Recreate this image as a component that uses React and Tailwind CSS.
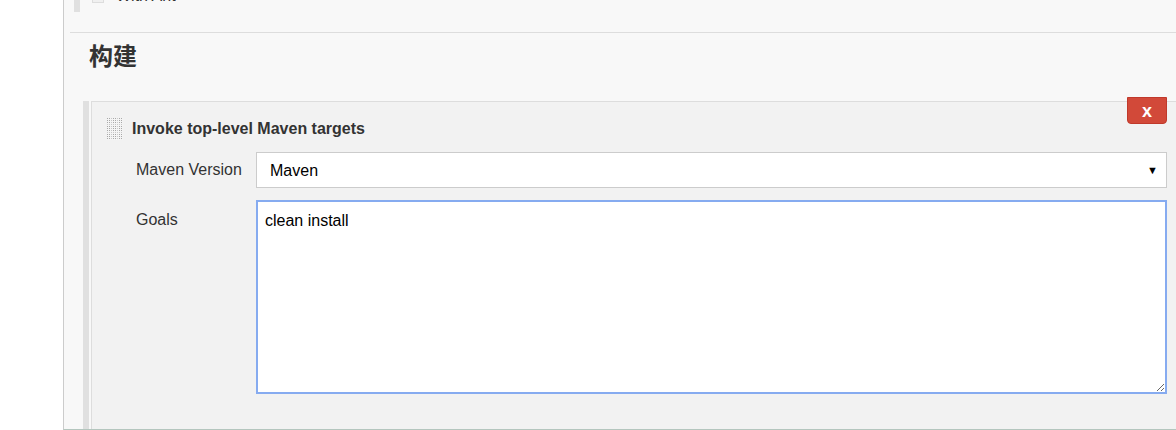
import React from "react";

function DragHandle() {
  const dots = [];
  for (let r = 0; r < 11; r++) {
    for (let c = 0; c < 8; c++) {
      dots.push(
        <rect key={r + "-" + c} x={c * 2} y={r * 2} width="1" height="1" fill={(r % 4 === 3 || c % 3 === 2) ? "#c8c8c8" : "#a8a8a8"} />
      );
    }
  }
  return (
    <svg width="16" height="22" viewBox="0 0 16 22" className="shrink-0">
      <rect x="0" y="0" width="16" height="22" fill="#f4f4f4" />
      {dots}
    </svg>
  );
}

export default function App() {
  return (
    <div className="w-[1176px] h-[430px] flex bg-white overflow-hidden" style={{ fontFamily: '"Liberation Sans", Arial, sans-serif' }}>
      <div className="w-[63px] shrink-0 bg-white" />
      <div className="flex-1 flex flex-col border-l border-[#cccccc] border-b border-b-[#b4c6be] bg-[#f8f8f8] min-w-0">
        {/* previous section tail */}
        <div className="h-[12px] flex ml-[10px] overflow-hidden">
          <div className="w-[6px] h-[12px] bg-[#e0e0e0]" />
          <div className="flex items-start h-[12px] overflow-hidden">
            <div className="ml-[12px] -mt-[12px] flex items-center gap-[12px] text-[16px] text-[#333]">
              <span className="w-[12px] h-[14px] border border-[#ddd] bg-[#f0f0f0] inline-block" />
              <span className="leading-[16px]">With Ant</span>
            </div>
          </div>
        </div>
        <div className="h-[20px]" />
        <div className="ml-[6px] border-t border-[#dddddd]" />
        <div className="pl-[25px] pt-[6px] h-[68px] text-[24px] leading-[32px] font-bold text-[#333]" style={{ fontFamily: '"Noto Sans CJK SC", "Liberation Sans", sans-serif' }}>
          构建
        </div>
        <div className="flex flex-1 ml-[19px]">
          <div className="w-[6px] bg-[#e0e0e0]" />
          <div className="w-[2px]" />
          <div className="relative flex-1 flex flex-col border-l border-t border-[#dddddd] bg-[#f2f2f2]">
            <button className="absolute -top-[5px] right-[9px] w-[40px] h-[27px] bg-[#d24939] border border-[#c0392b] rounded-b-[4px] text-white font-bold text-[18px] leading-[22px] flex items-center justify-center">
              x
            </button>
            <div className="flex items-center pl-[15px] pt-[15px] h-[38px]">
              <DragHandle />
              <span className="ml-[9px] text-[16px] font-bold text-[#333] leading-[20px]">Invoke top-level Maven targets</span>
            </div>
            <div className="flex items-center mt-[12px] pl-[44px] pr-[9px]">
              <div className="w-[120px] text-[16px] text-[#333]">Maven Version</div>
              <div className="flex-1 h-[36px] bg-white border border-[#cccccc] flex items-center justify-between pl-[13px] pr-[8px] pt-[1px] text-[16px] text-black">
                <span>Maven</span>
                <span className="text-[11px] leading-none">▼</span>
              </div>
            </div>
            <div className="flex mt-[12px] pl-[44px] pr-[9px]">
              <div className="w-[120px] text-[16px] text-[#333] pt-[8px]">Goals</div>
              <textarea
                readOnly
                defaultValue="clean install"
                className="flex-1 h-[194px] bg-white border-2 border-[#86abf0] outline-none px-[7px] pt-[9px] text-[16px] leading-[20px] text-black resize"
                style={{ fontFamily: '"Liberation Sans", Arial, sans-serif' }}
              />
            </div>
          </div>
        </div>
      </div>
    </div>
  );
}
